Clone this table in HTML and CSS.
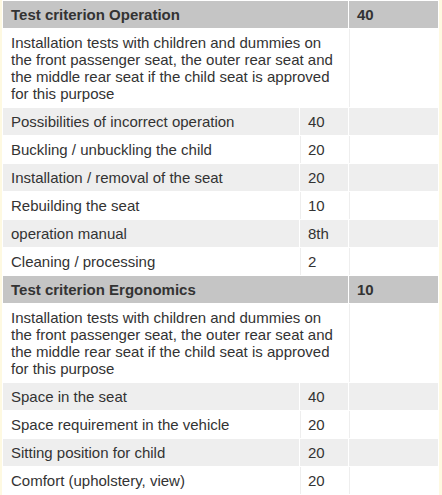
FILE: index.html
```html
<!DOCTYPE html>
<html>
<head>
<meta charset="utf-8">
<link rel="stylesheet" href="styles.css">
</head>
<body>
<table class="crit">
  <colgroup>
    <col class="c1"><col class="c2"><col class="c3">
  </colgroup>
  <tr class="head"><td colspan="2">Test criterion Operation</td><td>40</td></tr>
  <tr class="desc"><td colspan="2">Installation tests with children and dummies on the front passenger seat, the outer rear seat and the middle rear seat if the child seat is approved for this purpose</td><td></td></tr>
  <tr class="alt"><td>Possibilities of incorrect operation</td><td>40</td><td></td></tr>
  <tr><td>Buckling / unbuckling the child</td><td>20</td><td></td></tr>
  <tr class="alt"><td>Installation / removal of the seat</td><td>20</td><td></td></tr>
  <tr><td>Rebuilding the seat</td><td>10</td><td></td></tr>
  <tr class="alt"><td>operation manual</td><td>8th</td><td></td></tr>
  <tr><td>Cleaning / processing</td><td>2</td><td></td></tr>
  <tr class="head"><td colspan="2">Test criterion Ergonomics</td><td>10</td></tr>
  <tr class="desc"><td colspan="2">Installation tests with children and dummies on the front passenger seat, the outer rear seat and the middle rear seat if the child seat is approved for this purpose</td><td></td></tr>
  <tr class="alt"><td>Space in the seat</td><td>40</td><td></td></tr>
  <tr><td>Space requirement in the vehicle</td><td>20</td><td></td></tr>
  <tr class="alt"><td>Sitting position for child</td><td>20</td><td></td></tr>
  <tr><td>Comfort (upholstery, view)</td><td>20</td><td></td></tr>
</table>
</body>
</html>
```

FILE: styles.css
```css
html, body {
  margin: 0;
  padding: 0;
  background: #fef9e1;
}
.crit {
  margin: 0 0 0 2px;
  width: 437px;
  table-layout: fixed;
  border-collapse: separate;
  border-spacing: 1px;
  background: #ffffff;
  font-family: "Liberation Sans", Arial, sans-serif;
  font-size: 15px;
  line-height: 17px;
  color: #333333;
}
.c1 { width: 296px; }
.c2 { width: 48px; }
.c3 { width: 89px; }
.crit td {
  padding: 5px 8px;
  vertical-align: top;
  background: #ffffff;
}
.crit td + td {
  box-shadow: inset 1px 0 0 #eeeeee;
}
.crit tr.alt td {
  background: #eeeeee;
}
.crit tr.head td {
  background: #c5c5c5;
  font-weight: bold;
  box-shadow: none;
}
```
